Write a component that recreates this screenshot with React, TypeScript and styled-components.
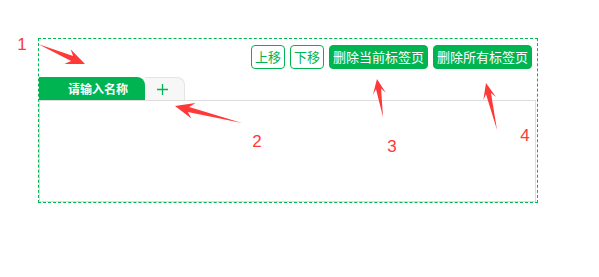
import { FC } from 'react';
import styled, { createGlobalStyle } from 'styled-components';

const green = '#00b551';
const red = '#ff3838';

const GlobalStyle = createGlobalStyle`
	html, body {
		margin: 0;
		padding: 0;
		background: #ffffff;
	}
	body {
		font-family: 'Noto Sans CJK SC', 'Liberation Sans', sans-serif;
	}
`;

const Page = styled.div`
	position: relative;
	width: 599px;
	height: 277px;
	padding: 38px 0 0 38px;
	box-sizing: border-box;
`;

const Frame = styled.div`
	width: 500px;
	height: 165px;
	box-sizing: border-box;
	border: 1px dashed ${green};
	display: flex;
	flex-direction: column;
`;

const Toolbar = styled.div`
	display: flex;
	justify-content: flex-end;
	gap: 5px;
	padding: 6px 5px 0 0;
`;

const Button = styled.button<{ $solid?: boolean }>`
	height: 24px;
	padding: 0 3px;
	box-sizing: border-box;
	border: 1px solid ${green};
	border-radius: 4px;
	background: ${(p) => (p.$solid ? green : '#ffffff')};
	color: ${(p) => (p.$solid ? '#ffffff' : green)};
	font-family: 'Noto Sans CJK SC', sans-serif;
	font-size: 13px;
	line-height: 22px;
	cursor: pointer;
`;

const TabBar = styled.div`
	display: flex;
	align-items: flex-end;
	margin-top: 8px;
	border-bottom: 1px solid #dddddd;
	margin-right: 1px;
`;

const Tab = styled.div`
	width: 106px;
	height: 23px;
	box-sizing: border-box;
	padding-left: 29px;
	background: ${green};
	color: #ffffff;
	font-size: 12px;
	font-weight: 700;
	line-height: 23px;
	border-top-right-radius: 8px;
`;

const AddTab = styled.div`
	width: 40px;
	height: 23px;
	box-sizing: border-box;
	background: #f7f7f7;
	border: 1px solid #e4e4e4;
	border-left: none;
	border-bottom: none;
	border-top-right-radius: 8px;
	display: flex;
	align-items: center;
	justify-content: center;
	padding-right: 4px;
`;

const Pane = styled.div`
	flex: 1;
	margin: 0 1px 0 0;
	border: 1px solid #dddddd;
	border-top: none;
`;

const Overlay = styled.svg`
	position: absolute;
	left: 0;
	top: 0;
	pointer-events: none;
`;

const Marker = styled.span<{ $x: number; $y: number }>`
	position: absolute;
	left: ${(p) => p.$x}px;
	top: ${(p) => p.$y}px;
	color: ${red};
	font-family: 'Liberation Sans', sans-serif;
	font-size: 17px;
	line-height: 1;
	transform: translate(-50%, -50%);
`;

type Pt = [number, number];

const arrowPoints = (tail: Pt, tip: Pt, head: number, half: number) => {
	const dx = tip[0] - tail[0];
	const dy = tip[1] - tail[1];
	const len = Math.hypot(dx, dy);
	const ux = dx / len;
	const uy = dy / len;
	const nx = -uy;
	const ny = ux;
	const at = (back: number, side: number): string =>
		`${(tip[0] - ux * back + nx * side).toFixed(1)},${(tip[1] - uy * back + ny * side).toFixed(1)}`;
	return [
		`${tail[0]},${tail[1]}`,
		at(head - 5, 2.6),
		at(head, half),
		`${tip[0]},${tip[1]}`,
		at(head, -half),
		at(head - 5, -2.6),
	].join(' ');
};

const arrows: { tail: Pt; tip: Pt; head: number; half: number }[] = [
	{ tail: [38, 44], tip: [85, 64], head: 19, half: 8 },
	{ tail: [242, 123], tip: [175, 106], head: 19, half: 8 },
	{ tail: [383, 117], tip: [377, 79], head: 15, half: 6.5 },
	{ tail: [497, 130], tip: [486, 83], head: 16, half: 6.5 },
];

const PlusIcon: FC = () => (
	<svg width="13" height="13" viewBox="0 0 13 13">
		<path d="M6.5 1v11M1 6.5h11" stroke={green} strokeWidth="1.3" />
	</svg>
);

const App: FC = () => {
	return (
		<>
			<GlobalStyle />
			<Page>
				<Frame>
					<Toolbar>
						<Button>上移</Button>
						<Button>下移</Button>
						<Button $solid>删除当前标签页</Button>
						<Button $solid>删除所有标签页</Button>
					</Toolbar>
					<TabBar>
						<Tab>请输入名称</Tab>
						<AddTab>
							<PlusIcon />
						</AddTab>
					</TabBar>
					<Pane />
				</Frame>
				<Overlay width="599" height="277">
					{arrows.map((a, i) => (
						<polygon key={i} points={arrowPoints(a.tail, a.tip, a.head, a.half)} fill={red} />
					))}
				</Overlay>
				<Marker $x={22} $y={44}>1</Marker>
				<Marker $x={257} $y={141}>2</Marker>
				<Marker $x={392} $y={146}>3</Marker>
				<Marker $x={525} $y={135}>4</Marker>
			</Page>
		</>
	);
};

export default App;
